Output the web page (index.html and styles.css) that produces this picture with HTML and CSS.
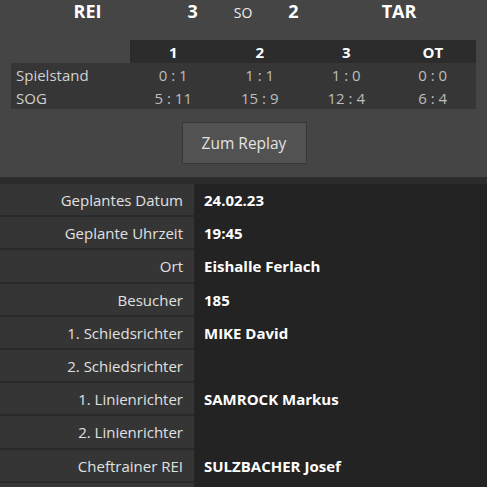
FILE: index.html
```html
<!DOCTYPE html>
<html lang="de">
<head>
<meta charset="utf-8">
<link rel="stylesheet" href="styles.css">
</head>
<body>
<div class="top">
  <div class="score">
    <div class="team">REI</div>
    <div class="mid">
      <span class="goals">3</span>
      <span class="so">SO</span>
      <span class="goals">2</span>
    </div>
    <div class="team">TAR</div>
  </div>
  <table class="periods">
    <thead>
      <tr><th class="blank"></th><th>1</th><th>2</th><th>3</th><th>OT</th></tr>
    </thead>
    <tbody>
      <tr><td class="lbl">Spielstand</td><td>0 : 1</td><td>1 : 1</td><td>1 : 0</td><td>0 : 0</td></tr>
      <tr><td class="lbl">SOG</td><td>5 : 11</td><td>15 : 9</td><td>12 : 4</td><td>6 : 4</td></tr>
    </tbody>
  </table>
  <div class="btnwrap"><button class="replay">Zum Replay</button></div>
</div>
<div class="strip"></div>
<div class="info">
  <div class="k">Geplantes Datum</div><div class="v">24.02.23</div>
  <div class="k">Geplante Uhrzeit</div><div class="v">19:45</div>
  <div class="k">Ort</div><div class="v">Eishalle Ferlach</div>
  <div class="k">Besucher</div><div class="v">185</div>
  <div class="k">1. Schiedsrichter</div><div class="v">MIKE David</div>
  <div class="k">2. Schiedsrichter</div><div class="v"></div>
  <div class="k">1. Linienrichter</div><div class="v">SAMROCK Markus</div>
  <div class="k">2. Linienrichter</div><div class="v"></div>
  <div class="k">Cheftrainer REI</div><div class="v">SULZBACHER Josef</div>
  <div class="k"></div><div class="v"></div>
</div>
</body>
</html>
```
FILE: styles.css
```css
html, body {
  margin: 0;
  padding: 0;
  background: #232323;
  font-family: "Open Sans", "Liberation Sans", sans-serif;
  overflow: hidden;
}
.top {
  background: #454545;
  padding: 0 11px 13px 11px;
}
.score {
  display: grid;
  grid-template-columns: 175px 1fr 176px;
  height: 23px;
  line-height: 23px;
  color: #fff;
  font-weight: 700;
  font-size: 18px;
  margin: 0 -11px;
}
.team {
  text-align: center;
}
.mid {
  display: flex;
  justify-content: center;
  align-items: baseline;
  gap: 36px;
}
.so {
  font-weight: 400;
  font-size: 14px;
  color: #eee;
}
.periods {
  margin-top: 17px;
  width: 465px;
  border-collapse: collapse;
  table-layout: fixed;
  font-size: 15px;
}
.periods th {
  background: #2c2c2c;
  color: #fff;
  font-weight: 700;
  height: 23px;
  padding: 0;
  text-align: center;
}
.periods th.blank {
  background: transparent;
  width: 119px;
}
.periods td {
  background: #363636;
  color: #bdbdbd;
  height: 23px;
  padding: 0;
  text-align: center;
}
.periods td.lbl {
  text-align: left;
  padding-left: 5px;
  color: #d0d0d0;
}
.btnwrap {
  display: flex;
  justify-content: center;
  margin-top: 13px;
}
.replay {
  width: 125px;
  height: 42px;
  background: #525252;
  border: 1px solid #383838;
  color: #e2e2e2;
  font-family: inherit;
  font-size: 15.5px;
  padding: 0;
  margin-left: 1px;
}
.strip {
  height: 7px;
  background: #2b2b2b;
}
.info {
  display: grid;
  grid-template-columns: 194px 1fr;
  font-size: 15px;
}
.k {
  background: #353535;
  color: #e0e0e0;
  text-align: right;
  padding-right: 11px;
  height: 31.2px;
  line-height: 33px;
  border-bottom: 2px solid #2a2a2a;
}
.v {
  background: #232323;
  color: #fff;
  font-weight: 700;
  padding-left: 10px;
  height: 33.2px;
  line-height: 33px;
}
```
